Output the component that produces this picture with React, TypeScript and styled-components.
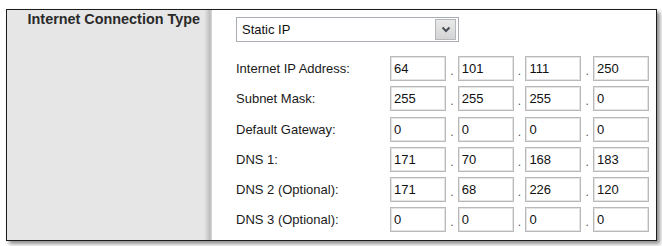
import React from "react";
import styled, { createGlobalStyle } from "styled-components";

const GlobalStyle = createGlobalStyle`
  html, body {
    margin: 0;
    padding: 0;
    background: #ffffff;
  }
  body {
    font-family: "Liberation Sans", Arial, sans-serif;
  }
`;

const Page = styled.div`
  width: 662px;
  height: 246px;
  padding: 9px 0 0 6px;
  box-sizing: border-box;
`;

const Frame = styled.div`
  width: 651px;
  height: 232px;
  box-sizing: border-box;
  border: 1.5px solid #1c1c1c;
  box-shadow: 3px 3px 4px rgba(0, 0, 0, 0.45);
  display: grid;
  grid-template-columns: 205px 1fr;
  background: #ffffff;
`;

const SidePanel = styled.div`
  background: linear-gradient(to right, #e6e6e6 0, #e6e6e6 197px, #d2d2d2 200px, #bdbdbd 203px, #d9d9d9 205px);
  padding: 1px 12px 0 0;
  text-align: right;
`;

const SectionTitle = styled.div`
  font-weight: bold;
  font-size: 14.4px;
  color: #2a2a2a;
  line-height: 16px;
`;

const Content = styled.div`
  padding: 7px 0 0 24px;
  display: flex;
  flex-direction: column;
`;

const SelectBox = styled.div`
  width: 223px;
  height: 25px;
  box-sizing: border-box;
  border: 1px solid #a9aeb4;
  display: flex;
  align-items: center;
  justify-content: space-between;
  padding: 0 2px 0 5px;
  margin-bottom: 14px;
  font-size: 13px;
  color: #111;
`;

const DropButton = styled.div`
  width: 21px;
  height: 21px;
  box-sizing: border-box;
  border: 1px solid #b4b8bd;
  background: linear-gradient(#e9e9e9, #d4d4d4);
  display: flex;
  align-items: center;
  justify-content: center;
`;

const FieldRow = styled.div`
  display: flex;
  align-items: center;
  height: 25px;
  margin-bottom: 5.3px;
`;

const FieldLabel = styled.div`
  width: 154px;
  font-size: 13px;
  color: #1a1a1a;
`;

const Octet = styled.div`
  width: 56px;
  height: 25px;
  box-sizing: border-box;
  border: 1px solid #b9b9b9;
  box-shadow: inset 0 0 0 1px #e4e4e4;
  font-size: 13px;
  color: #111;
  padding: 0 3px;
  display: flex;
  align-items: center;
`;

const Dot = styled.div`
  width: 11.7px;
  height: 25px;
  display: flex;
  align-items: flex-end;
  justify-content: center;
  font-size: 12px;
  color: #555;
  line-height: 19px;
`;

const rows: { label: string; octets: string[] }[] = [
  { label: "Internet IP Address:", octets: ["64", "101", "111", "250"] },
  { label: "Subnet Mask:", octets: ["255", "255", "255", "0"] },
  { label: "Default Gateway:", octets: ["0", "0", "0", "0"] },
  { label: "DNS 1:", octets: ["171", "70", "168", "183"] },
  { label: "DNS 2 (Optional):", octets: ["171", "68", "226", "120"] },
  { label: "DNS 3 (Optional):", octets: ["0", "0", "0", "0"] },
];

const Chevron: React.FC = () => (
  <svg width="10" height="7" viewBox="0 0 10 7">
    <path d="M1.5 1.5 L5 5 L8.5 1.5" fill="none" stroke="#4a4f57" strokeWidth="2" />
  </svg>
);

export default function App() {
  return (
    <Page>
      <GlobalStyle />
      <Frame>
        <SidePanel>
          <SectionTitle>Internet Connection Type</SectionTitle>
        </SidePanel>
        <Content>
          <SelectBox>
            <span>Static IP</span>
            <DropButton>
              <Chevron />
            </DropButton>
          </SelectBox>
          {rows.map((row) => (
            <FieldRow key={row.label}>
              <FieldLabel>{row.label}</FieldLabel>
              {row.octets.map((value, i) => (
                <React.Fragment key={i}>
                  {i > 0 && <Dot>.</Dot>}
                  <Octet>{value}</Octet>
                </React.Fragment>
              ))}
            </FieldRow>
          ))}
        </Content>
      </Frame>
    </Page>
  );
}
